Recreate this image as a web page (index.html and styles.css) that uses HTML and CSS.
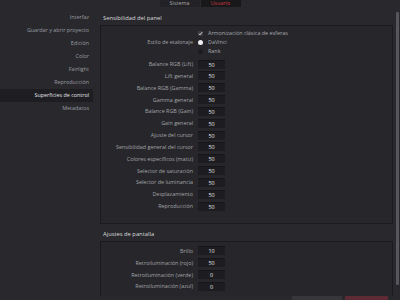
FILE: index.html
```html
<!DOCTYPE html>
<html lang="es">
<head>
<meta charset="utf-8">
<title>Preferencias</title>
<link rel="stylesheet" href="styles.css">
</head>
<body>
<div class="window">
  <div class="tabs">
    <div class="tab">Sistema</div>
    <div class="tab active">Usuario</div>
  </div>
  <div class="body">
    <nav class="sidebar">
      <div class="nav-item">Interfaz</div>
      <div class="nav-item">Guardar y abrir proyecto</div>
      <div class="nav-item">Edición</div>
      <div class="nav-item">Color</div>
      <div class="nav-item">Fairlight</div>
      <div class="nav-item">Reproducción</div>
      <div class="nav-item selected">Superficies de control</div>
      <div class="nav-item">Metadatos</div>
    </nav>
    <main class="main">
      <div class="scroll">
        <section class="section">
          <h2 class="section-title">Sensibilidad del panel</h2>
          <div class="box box-panel">
            <div class="opt-row">
              <span class="label"></span>
              <span class="control"><span class="checkbox"><svg viewBox="0 0 6 6" width="5" height="5"><path d="M1 3.2 L2.4 4.6 L5 1.4" fill="none" stroke="#f2f2f2" stroke-width="1.1"/></svg></span><span class="opt-text">Armonización clásica de esferas</span></span>
            </div>
            <div class="opt-row">
              <span class="label">Estilo de etalonaje</span>
              <span class="control"><span class="radio on"></span><span class="opt-text">DaVinci</span></span>
            </div>
            <div class="opt-row">
              <span class="label"></span>
              <span class="control"><span class="radio"></span><span class="opt-text">Rank</span></span>
            </div>
            <div class="num-group">
              <div class="num-row"><span class="label">Balance RGB (Lift)</span><span class="num">50</span></div>
              <div class="num-row"><span class="label">Lift general</span><span class="num">50</span></div>
              <div class="num-row"><span class="label">Balance RGB (Gamma)</span><span class="num">50</span></div>
              <div class="num-row"><span class="label">Gamma general</span><span class="num">50</span></div>
              <div class="num-row"><span class="label">Balance RGB (Gain)</span><span class="num">50</span></div>
              <div class="num-row"><span class="label">Gain general</span><span class="num">50</span></div>
              <div class="num-row"><span class="label">Ajuste del cursor</span><span class="num">50</span></div>
              <div class="num-row"><span class="label">Sensibilidad general del cursor</span><span class="num">50</span></div>
              <div class="num-row"><span class="label">Colores específicos (matiz)</span><span class="num">50</span></div>
              <div class="num-row"><span class="label">Selector de saturación</span><span class="num">50</span></div>
              <div class="num-row"><span class="label">Selector de luminancia</span><span class="num">50</span></div>
              <div class="num-row"><span class="label">Desplazamiento</span><span class="num">50</span></div>
              <div class="num-row"><span class="label">Reproducción</span><span class="num">50</span></div>
            </div>
          </div>
        </section>
        <section class="section">
          <h2 class="section-title">Ajustes de pantalla</h2>
          <div class="box box-display">
            <div class="num-group">
              <div class="num-row"><span class="label">Brillo</span><span class="num">10</span></div>
              <div class="num-row"><span class="label">Retroiluminación (rojo)</span><span class="num">50</span></div>
              <div class="num-row"><span class="label">Retroiluminación (verde)</span><span class="num">0</span></div>
              <div class="num-row"><span class="label">Retroiluminación (azul)</span><span class="num">0</span></div>
            </div>
          </div>
        </section>
      </div>
      <div class="scrollbar"><div class="thumb"></div></div>
    </main>
  </div>
  <footer class="footer">
    <button class="btn" aria-label="Cancelar"></button>
    <button class="btn primary" aria-label="Guardar"></button>
  </footer>
</div>
</body>
</html>
```
FILE: styles.css
```css
* { box-sizing: border-box; }
html, body {
  margin: 0;
  padding: 0;
  background: #28282d;
  overflow: hidden;
}
body {
  font-family: "Open Sans", "DejaVu Sans", sans-serif;
  font-size: 5.4px;
  color: #a3a3a6;
}
.window {
  width: 400px;
  height: 320px;
  display: flex;
  flex-direction: column;
}
.tabs {
  height: 8px;
  display: flex;
  justify-content: center;
  align-items: flex-start;
  gap: 1px;
}
.tab {
  width: 40px;
  height: 7px;
  line-height: 6.5px;
  text-align: center;
  background: #222226;
  color: #a8a8ab;
}
.tab.active {
  background: #18181b;
  color: #c8383d;
}
.body {
  height: 288px;
  display: flex;
}
.sidebar {
  width: 93px;
  padding-top: 2.5px;
  display: flex;
  flex-direction: column;
}
.nav-item {
  height: 13px;
  line-height: 13px;
  text-align: right;
  padding-right: 4px;
  color: #9c9ca0;
  white-space: nowrap;
}
.nav-item.selected {
  background: #1e1e22;
  color: #e4e4e6;
}
.main {
  flex: 1;
  display: flex;
  margin-left: 7px;
}
.scroll {
  flex: 1;
  padding-top: 4px;
  display: flex;
  flex-direction: column;
  gap: 4px;
  overflow: hidden;
}
.section-title {
  margin: 0;
  height: 13px;
  line-height: 12px;
  font-size: 5.8px;
  font-weight: normal;
  color: #dcdcde;
  padding-left: 3px;
}
.box {
  border: 1px solid #1b1b1f;
  background: #26262b;
}
.box-panel {
  height: 199px;
  padding-top: 2.5px;
}
.box-display {
  height: 70px;
  padding-top: 3px;
}
.opt-row {
  height: 9px;
  display: flex;
  align-items: center;
}
.label {
  width: 92px;
  flex: none;
  text-align: right;
  white-space: nowrap;
  color: #a3a3a6;
}
.control {
  margin-left: 5px;
  display: flex;
  align-items: center;
  gap: 5px;
}
.checkbox {
  width: 5px;
  height: 5px;
  background: #3a3a3f;
  display: flex;
  align-items: center;
  justify-content: center;
}
.checkbox svg { display: block; }
.radio {
  width: 5px;
  height: 5px;
  border-radius: 50%;
  background: #1c1c20;
}
.radio.on {
  background: #f0f0f2;
}
.opt-text {
  color: #a8a8ab;
  white-space: nowrap;
}
.num-group {
  margin-top: 2.6px;
  display: flex;
  flex-direction: column;
}
.box-display .num-group { margin-top: 0; }
.num-row {
  height: 11.85px;
  display: flex;
  align-items: center;
}
.num {
  margin-left: 5px;
  width: 27px;
  height: 9px;
  line-height: 8px;
  text-align: center;
  background: #1d1d21;
  border-top: 1px solid #161619;
  color: #e6e6e8;
  font-size: 5.4px;
}
.scrollbar {
  width: 3px;
  margin-left: 2.5px;
  margin-right: 1.5px;
  padding-top: 4px;
  padding-bottom: 11px;
  display: flex;
  flex-direction: column;
}
.thumb {
  flex: 1;
  background: #56565c;
  border-radius: 1px;
}
.footer {
  display: flex;
  justify-content: flex-end;
  gap: 3px;
  padding-right: 12px;
}
.btn {
  width: 50px;
  height: 14px;
  border: none;
  border-radius: 1px;
  background: #36363b;
  padding: 0;
}
.btn.primary {
  width: 43px;
  background: #5e2a33;
}
```
